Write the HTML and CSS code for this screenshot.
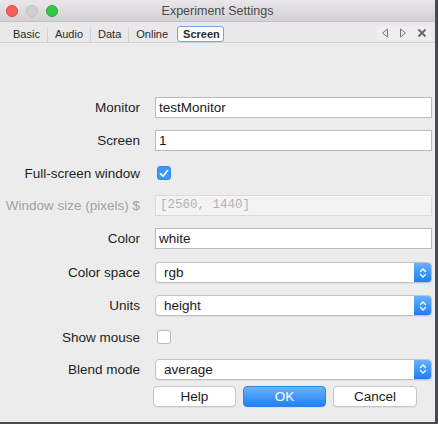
FILE: index.html
```html
<!DOCTYPE html>
<html>
<head>
<meta charset="utf-8">
<link rel="stylesheet" href="styles.css">
</head>
<body>
<div class="window">
  <div class="titlebar">
    <div class="lights">
      <span class="light red"></span>
      <span class="light gray"></span>
      <span class="light green"></span>
    </div>
    <div class="title">Experiment Settings</div>
  </div>
  <div class="tabbar">
    <div class="tabs">
      <span class="tab">Basic</span>
      <span class="sep"></span>
      <span class="tab">Audio</span>
      <span class="sep"></span>
      <span class="tab">Data</span>
      <span class="sep"></span>
      <span class="tab">Online</span>
      <span class="tab active">Screen</span>
    </div>
    <div class="tabnav">
      <svg width="8" height="10" viewBox="0 0 8 10"><path d="M6.5 1 L1.5 5 L6.5 9 Z" fill="none" stroke="#777" stroke-width="1"/></svg>
      <svg width="8" height="10" viewBox="0 0 8 10"><path d="M1.5 1 L6.5 5 L1.5 9 Z" fill="none" stroke="#777" stroke-width="1"/></svg>
      <svg width="10" height="10" viewBox="0 0 10 10"><path d="M1.5 1.5 L8.5 8.5 M8.5 1.5 L1.5 8.5" stroke="#666" stroke-width="1.8"/></svg>
    </div>
  </div>
  <div class="content">
    <div class="form">
      <label class="lbl">Monitor</label>
      <div class="field"><div class="input">testMonitor</div></div>

      <label class="lbl">Screen</label>
      <div class="field"><div class="input">1</div></div>

      <label class="lbl">Full-screen window</label>
      <div class="field"><span class="check on"><svg width="10" height="9" viewBox="0 0 10 9"><path d="M1.5 4.8 L4 7.2 L8.6 1.6" fill="none" stroke="#fff" stroke-width="1.6" stroke-linecap="round" stroke-linejoin="round"/></svg></span></div>

      <label class="lbl disabled">Window size (pixels) $</label>
      <div class="field"><div class="input dis">[2560, 1440]</div></div>

      <label class="lbl">Color</label>
      <div class="field"><div class="input">white</div></div>

      <label class="lbl">Color space</label>
      <div class="field"><div class="select"><span class="val">rgb</span><span class="stepper"><svg width="8" height="12" viewBox="0 0 8 12"><path d="M1.5 4.5 L4 2 L6.5 4.5 M1.5 7.5 L4 10 L6.5 7.5" fill="none" stroke="#fff" stroke-width="1.3" stroke-linecap="round" stroke-linejoin="round"/></svg></span></div></div>

      <label class="lbl">Units</label>
      <div class="field"><div class="select"><span class="val">height</span><span class="stepper"><svg width="8" height="12" viewBox="0 0 8 12"><path d="M1.5 4.5 L4 2 L6.5 4.5 M1.5 7.5 L4 10 L6.5 7.5" fill="none" stroke="#fff" stroke-width="1.3" stroke-linecap="round" stroke-linejoin="round"/></svg></span></div></div>

      <label class="lbl">Show mouse</label>
      <div class="field"><span class="check"></span></div>

      <label class="lbl">Blend mode</label>
      <div class="field"><div class="select"><span class="val">average</span><span class="stepper"><svg width="8" height="12" viewBox="0 0 8 12"><path d="M1.5 4.5 L4 2 L6.5 4.5 M1.5 7.5 L4 10 L6.5 7.5" fill="none" stroke="#fff" stroke-width="1.3" stroke-linecap="round" stroke-linejoin="round"/></svg></span></div></div>
    </div>
    <div class="buttons">
      <span class="btn">Help</span>
      <span class="btn primary">OK</span>
      <span class="btn">Cancel</span>
    </div>
  </div>
</div>
</body>
</html>
```

FILE: styles.css
```css
* { box-sizing: border-box; }
html, body { margin: 0; padding: 0; }
body {
  width: 438px;
  height: 424px;
  background: #4a4a4c;
  font-family: "Liberation Sans", Arial, sans-serif;
  overflow: hidden;
}
.window {
  width: 435px;
  height: 422px;
  background: #ececec;
  display: flex;
  flex-direction: column;
}
.titlebar {
  height: 22px;
  background: linear-gradient(#e9e7e9, #d3d1d3);
  border-bottom: 1px solid #c6c4c6;
  position: relative;
  display: flex;
  align-items: center;
  justify-content: center;
}
.lights {
  position: absolute;
  left: 6px;
  top: 5px;
  display: flex;
  gap: 8px;
}
.light {
  width: 12px;
  height: 12px;
  border-radius: 50%;
  display: block;
}
.light.red { background: #fc5f57; border: 1px solid #e0443e; }
.light.gray { background: #d1d0d1; border: 1px solid #bfbdbf; }
.light.green { background: #34c84a; border: 1px solid #25a93a; }
.title {
  font-size: 12.5px;
  color: #4a4a4a;
}
.tabbar {
  height: 21px;
  background: #e9e9e9;
  border-bottom: 1px solid #d2d2d2;
  display: flex;
  align-items: center;
  justify-content: space-between;
  padding: 0 4px 0 12px;
}
.tabs {
  align-self: flex-end;
  display: flex;
  align-items: center;
  font-size: 11px;
  color: #2a2a2a;
  height: 16px;
}
.tab { padding: 0; margin: 0 7px; }
.tab:first-child { margin-left: 1px; }
.sep {
  width: 1px;
  height: 15px;
  background: #d4d4d4;
}
.tab.active {
  font-weight: bold;
  background: #fff;
  border: 1.5px solid #6fa6e3;
  border-radius: 3px;
  padding: 1px 3px 1px 5px;
  margin-left: 2px;
  height: 16px;
  line-height: 13px;
}
.tabnav {
  display: flex;
  align-items: center;
  gap: 10px;
  background: #eeeeee;
  height: 14px;
  padding: 0 4px 0 4px;
  margin-top: 2px;
}
.content {
  flex: 1;
  padding-top: 48px;
}
.form {
  display: grid;
  grid-template-columns: 140px 277px;
  column-gap: 15px;
  grid-template-rows: 33px 33px 32px 32px 35px 33px 33px 30px 34px;
}
.lbl {
  font-size: 13.5px;
  color: #1e1e1e;
  text-align: right;
  align-self: center;
  white-space: nowrap;
}
.lbl.disabled { color: #a2a2a2; }
.field {
  display: flex;
  align-items: center;
}
.input {
  width: 100%;
  height: 21px;
  background: #fff;
  border: 1px solid #bcbcbc;
  font-size: 13.5px;
  color: #1a1a1a;
  padding: 0 3px;
  line-height: 19px;
}
.input.dis {
  border-color: #dadada;
  background: #f3f3f3;
  color: #b3b3b3;
  font-family: "Liberation Mono", "Courier New", monospace;
  font-size: 12.5px;
  padding-left: 4px;
}
.check {
  width: 14px;
  height: 14px;
  margin-left: 2px;
  border-radius: 3px;
  border: 1px solid #b8b8b8;
  background: #fff;
  display: flex;
  align-items: center;
  justify-content: center;
}
.check.on {
  background: #3d98fa;
  border-color: #3188ea;
}
.select {
  width: 100%;
  height: 21px;
  background: #fff;
  border: 1px solid #c3c3c3;
  border-radius: 4px;
  display: flex;
  align-items: stretch;
  overflow: hidden;
  box-shadow: 0 1px 0 rgba(0,0,0,0.06);
}
.select .val {
  flex: 1;
  font-size: 13.5px;
  color: #1a1a1a;
  padding-left: 8px;
  line-height: 19px;
}
.stepper {
  width: 17px;
  background: linear-gradient(#69b1fa, #1b7ffa);
  display: flex;
  align-items: center;
  justify-content: center;
}
.buttons {
  display: flex;
  gap: 6px;
  margin-left: 153px;
}
.btn {
  width: 83px;
  height: 21px;
  background: #fff;
  border: 1px solid #c6c6c6;
  border-radius: 4px;
  font-size: 13.5px;
  color: #1a1a1a;
  display: flex;
  align-items: center;
  justify-content: center;
  box-shadow: 0 1px 0 rgba(0,0,0,0.05);
}
.btn.primary {
  background: linear-gradient(#6cb3fa, #1f80fa);
  border-color: #2a82ee;
  color: #fff;
  margin: 0 1px;
}
.btn:last-child { width: 84px; }
```
